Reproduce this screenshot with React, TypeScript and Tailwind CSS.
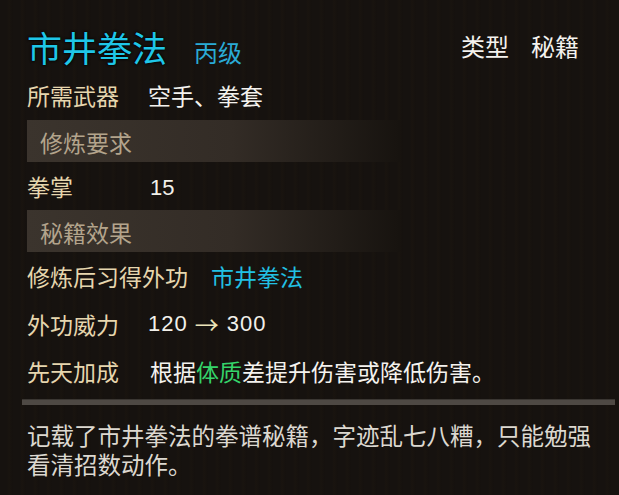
const font = "font-['Noto_Sans_CJK_SC','Noto_Sans',sans-serif]";

type Row = { label: string; value: React.ReactNode; wide?: boolean };

function StatRow({ label, value, wide }: Row) {
  return (
    <div className="flex items-center h-[48px]">
      <span className={`${wide ? "pr-[23px]" : "w-[121px]"} shrink-0 text-[#e6d6ae]`}>{label}</span>
      <span className="text-[#f2f0ea]">{value}</span>
    </div>
  );
}

function SectionBar({ title }: { title: string }) {
  return (
    <div className="h-[42px] flex items-center pl-[13px] pt-[3px] mr-[219px] bg-[linear-gradient(90deg,#3b342d_0%,#332c26_55%,#17130f_100%)] text-[#b3a48c]">
      {title}
    </div>
  );
}

export default function App() {
  return (
    <div className={`w-[619px] h-[495px] overflow-hidden bg-[#16120f] bg-[repeating-linear-gradient(90deg,#16120f_0px,#16120f_7px,#19140f_9px,#15110e_13px)] ${font} text-[23px] leading-none`}>
      <div className="pl-[27px] pt-[20px]">
        {/* header */}
        <div className="flex items-center justify-between h-[52px] pr-[40px]">
          <div className="flex items-baseline gap-[27px]">
            <span className="text-[35px] text-[#1fc6e8] [text-shadow:0_0_3px_#000,0_0_2px_#000]">市井拳法</span>
            <span className="text-[#2aabd6] text-[24px]">丙级</span>
          </div>
          <div className="flex gap-[22px] text-[#f4f2ee] text-[24px]">
            <span>类型</span>
            <span>秘籍</span>
          </div>
        </div>

        <div className="flex items-center h-[46px]">
          <span className="w-[121px] shrink-0 text-[#e6d6ae]">所需武器</span>
          <span className="text-[#f4f2ee]">空手、拳套</span>
        </div>

        <div className="mt-[2px]">
          <SectionBar title="修炼要求" />
        </div>
        <StatRow label="拳掌" value={<span className="font-['Liberation_Sans',sans-serif] text-[22px] pl-[2px]">15</span>} />
        <SectionBar title="秘籍效果" />

        <StatRow label="修炼后习得外功" wide value={<span className="text-[#22c0e4]">市井拳法</span>} />
        <StatRow
          label="外功威力"
          value={
            <span className="flex items-center gap-[7px] text-[22px] font-['Liberation_Sans',sans-serif] tracking-[1px]">
              <span>120</span>
              <span className={`text-[#ece4b8] ${font} text-[24px]`}>→</span>
              <span>300</span>
            </span>
          }
        />
        <div className="flex items-center h-[47px]">
          <span className="w-[123px] shrink-0 text-[#e6d6ae]">先天加成</span>
          <span className="text-[#f4f2ee]">
            根据<span className="text-[#35d46a]">体质</span>差提升伤害或降低伤害。
          </span>
        </div>
      </div>

      <div className="mx-[22px] mr-[4px] mt-[4px] h-[6px] bg-[#4e4944] border-t border-[#3a3632]" />

      <div className="pl-[27px] pr-[16px] mt-[18px] flex flex-col gap-[5px] text-[#dcd8d0] text-[23.5px] leading-[24px]">
        <div>记载了市井拳法的拳谱秘籍，字迹乱七八糟，只能勉强</div>
        <div>看清招数动作。</div>
      </div>
    </div>
  );
}
